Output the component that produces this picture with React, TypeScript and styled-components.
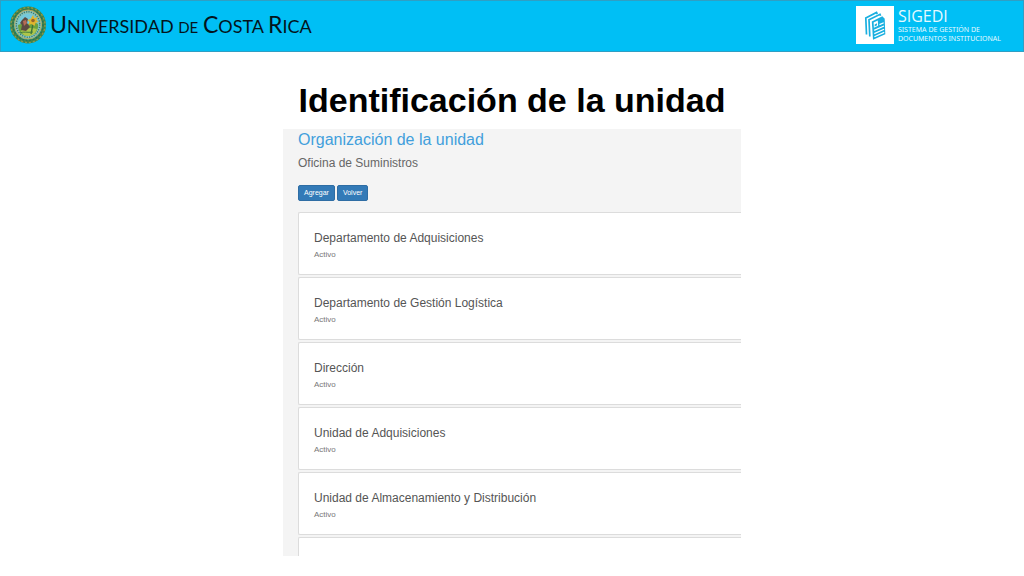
import React from 'react';
import styled, { createGlobalStyle } from 'styled-components';

const GlobalStyle = createGlobalStyle`
  *, *::before, *::after { box-sizing: border-box; }
  body {
    margin: 0;
    background: #fff;
    font-family: "Liberation Sans", Arial, sans-serif;
  }
  h1, h2, h3, p, ul { margin: 0; padding: 0; font-weight: 400; }
`;

const Header = styled.header`
  display: flex;
  justify-content: space-between;
  align-items: center;
  height: 52px;
  padding: 0 22px 2px 8px;
  background: #00bff5;
  border: 1px solid #2f9fc4;
`;

const Brand = styled.div`
  display: flex;
  align-items: center;
  gap: 3px;
`;

const Wordmark = styled.span`
  font-family: Lato, sans-serif;
  font-size: 18px;
  line-height: 28px;
  color: #04141c;
  white-space: nowrap;
`;

const Initial = styled.span`
  font-size: 23px;
`;

const Minor = styled.span`
  font-size: 15px;
`;

const System = styled.div`
  display: flex;
  align-items: center;
  gap: 4px;
`;

const SystemText = styled.div`
  color: #e6f9ff;
  white-space: nowrap;
`;

const SystemName = styled.p`
  font-family: "Open Sans", sans-serif;
  font-size: 16px;
  line-height: 17px;
`;

const SystemDetail = styled.p`
  font-family: "Noto Sans", sans-serif;
  font-size: 7px;
  line-height: 9px;
`;

const Main = styled.main`
  display: flex;
  flex-direction: column;
  align-items: center;
  padding: 28px 16px 20px;
`;

const Title = styled.h1`
  font-size: 34px;
  line-height: 40px;
  font-weight: 700;
  color: #000;
`;

const Panel = styled.section`
  width: 100%;
  max-width: 458px;
  margin-top: 9px;
  padding: 2px 0 0 15px;
  background: #f4f4f4;
`;

const PanelTitle = styled.h2`
  font-size: 16px;
  line-height: 18px;
  color: #429fdc;
`;

const Office = styled.p`
  margin-top: 7px;
  font-size: 12px;
  line-height: 14px;
  color: #666;
`;

const Actions = styled.div`
  display: flex;
  gap: 2px;
  margin: 15px 0 11px;
`;

const Button = styled.button`
  height: 16px;
  padding: 0 5px;
  border: 1px solid #2e6da4;
  border-radius: 2px;
  background: #337ab7;
  color: #fff;
  font: 7px/14px "Liberation Sans", Arial, sans-serif;
`;

const Units = styled.ul`
  display: flex;
  flex-direction: column;
  gap: 2px;
  list-style: none;
`;

const Unit = styled.li<{ $cut?: boolean }>`
  height: ${(p) => (p.$cut ? 19 : 63)}px;
  padding: 18px 15px 0;
  background: #fff;
  border: 1px solid #dcdcdc;
  border-right: 0;
  border-bottom-width: ${(p) => (p.$cut ? 0 : 1)}px;
  border-radius: ${(p) => (p.$cut ? '2px 0 0 0' : '2px 0 0 2px')};
`;

const UnitName = styled.h3`
  font-size: 12px;
  line-height: 14px;
  color: #555;
`;

const Status = styled.p`
  margin-top: 5px;
  font-size: 8px;
  line-height: 10px;
  color: #777;
`;

const units = [
  'Departamento de Adquisiciones',
  'Departamento de Gestión Logística',
  'Dirección',
  'Unidad de Adquisiciones',
  'Unidad de Almacenamiento y Distribución',
];

const Seal = () => (
  <svg width="38" height="38" viewBox="0 0 38 38" aria-hidden="true">
    <ellipse cx="19" cy="19" rx="16" ry="16.5" fill="none" stroke="#40834b" strokeWidth="4" />
    <ellipse cx="19" cy="19" rx="17" ry="17.5" fill="none" stroke="#8b9748" strokeWidth="1.5" strokeDasharray="2 2" />
    <ellipse cx="19" cy="19" rx="15" ry="15.5" fill="none" stroke="#276d58" strokeWidth="1.5" strokeDasharray="1.5 2" />
    <ellipse cx="19" cy="18.5" rx="13.5" ry="14.5" fill="#86c5bd" stroke="#bba756" />
    <ellipse cx="19" cy="18.5" rx="11.7" ry="12.7" fill="none" stroke="#3c786e" strokeWidth="1.4" strokeDasharray="1.2 1.2" />
    <ellipse cx="19" cy="19" rx="10.2" ry="11.2" fill="#74c9db" />
    <path d="M9 19c4-2 7 0 10-1s6-2 10 0c1 7-4 12-10 12S9 26 9 19Z" fill="#6ca23e" />
    <path d="M12 25c3-3 10-4 16-2-2 5-5 7-9 7-3 0-6-2-7-5Z" fill="#afc64b" />
    <path d="M13 14l3-3 3 2-1 4 3 4-4 4-5-1 1-5-2-2Z" fill="#5d4b42" />
    <path d="M14 15l3-1 1 3-3 3Z" fill="#b76b55" />
    <path d="M24 18l-2 10" stroke="#39713a" strokeWidth="1.3" />
    <path d="M24 9l1.5 3 3-1-1 3 2 2-3 1-1 3-3-2-3 1 1-3-2-2 3-1Z" fill="#e0b52f" />
    <circle cx="24" cy="14.5" r="1.8" fill="#93662c" />
    <path d="M11 27c4-2 7 0 13-1" fill="none" stroke="#3f7d3d" />
  </svg>
);

const DocumentsMark = () => (
  <svg width="38" height="38" viewBox="0 0 38 38" aria-hidden="true">
    <path fill="#fff" d="M0 0h38v38H0z" />
    <g fill="none" stroke="#19afe0" strokeWidth="1.7">
      <path d="M10.5 28.5L9.8 12 20.5 6.5l.8 1.5" />
      <path d="M13.8 30.5L13 13.8 24 8.3l.6 1.5" />
    </g>
    <path d="M15.8 15.5L26.3 10.2l2.4 2.6.6 15.5L17 33.8Z" fill="#19afe0" />
    <path d="M17.6 16.6l4.2-2.1.3 5.3-4.2 1.9Z" fill="#fff" />
    <path d="M18.6 18.5l2.4-1.2.1 2-2.4 1.1Z" fill="#19afe0" />
    <g stroke="#fff" strokeWidth="1.2">
      <path d="M23.5 18.6l4.2-1.9M18.2 24.4l9.8-4.4M18.3 27.6l9.8-4.4M18.4 30.8l9.8-4.4" />
    </g>
  </svg>
);

export default function App() {
  return (
    <>
      <GlobalStyle />
      <Header>
        <Brand>
          <Seal />
          <Wordmark>
            <Initial>U</Initial>NIVERSIDAD <Minor>DE</Minor> <Initial>C</Initial>OSTA <Initial>R</Initial>ICA
          </Wordmark>
        </Brand>
        <System>
          <DocumentsMark />
          <SystemText>
            <SystemName>SIGEDI</SystemName>
            <SystemDetail>SISTEMA DE GESTIÓN DE</SystemDetail>
            <SystemDetail>DOCUMENTOS INSTITUCIONAL</SystemDetail>
          </SystemText>
        </System>
      </Header>
      <Main>
        <Title>Identificación de la unidad</Title>
        <Panel>
          <PanelTitle>Organización de la unidad</PanelTitle>
          <Office>Oficina de Suministros</Office>
          <Actions>
            <Button type="button">Agregar</Button>
            <Button type="button">Volver</Button>
          </Actions>
          <Units>
            {units.map((name) => (
              <Unit key={name}>
                <UnitName>{name}</UnitName>
                <Status>Activo</Status>
              </Unit>
            ))}
            <Unit $cut aria-hidden="true" />
          </Units>
        </Panel>
      </Main>
    </>
  );
}
